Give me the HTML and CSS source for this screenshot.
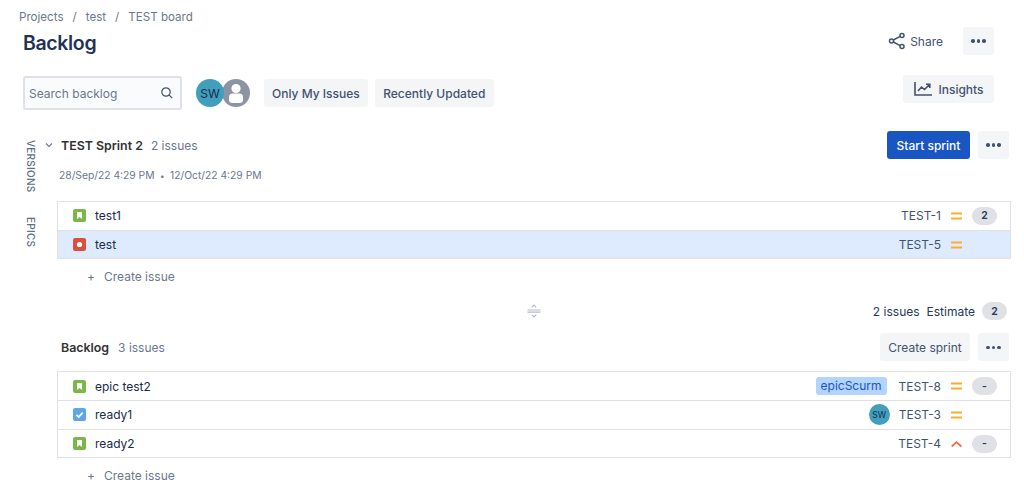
FILE: index.html
```html
<!DOCTYPE html>
<html lang="en">
<head>
<meta charset="utf-8">
<title>Backlog</title>
<link rel="stylesheet" href="styles.css">
</head>
<body>
<div class="page">
  <nav class="crumbs"><span>Projects</span><span class="sep">/</span><span>test</span><span class="sep">/</span><span>TEST board</span></nav>
  <header class="title-row">
    <h1>Backlog</h1>
    <div class="title-actions">
      <span class="share">
        <svg width="18" height="18" viewBox="0 0 18 18" fill="none" stroke="#42526e" stroke-width="1.5"><circle cx="3.5" cy="9" r="2"/><circle cx="14" cy="3.5" r="2"/><circle cx="14" cy="14.5" r="2"/><path d="M5.3 8l6.9-3.6M5.3 10l6.9 3.6"/></svg>
        Share
      </span>
      <button class="btn dots"><i></i><i></i><i></i></button>
    </div>
  </header>
  <div class="toolbar">
    <div class="search"><span>Search backlog</span>
      <svg width="14" height="14" viewBox="0 0 14 14" fill="none" stroke="#42526e" stroke-width="1.2"><circle cx="6" cy="6" r="4.2"/><path d="M9.2 9.2l3 3"/></svg>
    </div>
    <div class="avatars">
      <span class="avatar sw">SW</span>
      <span class="avatar ghost">
        <svg width="28" height="28" viewBox="0 0 28 28"><circle cx="14" cy="14" r="14" fill="#8c93a3"/><circle cx="14" cy="9.5" r="4.6" fill="#fff"/><rect x="7" y="14.5" width="14" height="9.5" rx="3.5" fill="#fff"/></svg>
      </span>
    </div>
    <button class="btn filter">Only My Issues</button>
    <button class="btn filter">Recently Updated</button>
    <button class="btn insights">
      <svg width="18" height="14" viewBox="0 0 18 14" fill="none" stroke="#42526e" stroke-width="1.6"><path d="M1 0v13h17"/><path d="M4 9l3.5-4 3 2.5L15.5 2.5M12 2.2h3.8V6"/></svg>
      Insights
    </button>
  </div>
  <div class="body">
    <aside class="rail"><span>VERSIONS</span><span>EPICS</span></aside>
    <main class="content">
      <section class="sprint">
        <div class="sec-head">
          <div class="sec-title">
            <svg class="chev" width="8" height="6" viewBox="0 0 8 6" fill="none" stroke="#6b778c" stroke-width="1.1"><path d="M1 1.5l3 3 3-3"/></svg>
            <strong>TEST Sprint 2</strong><span class="count">2 issues</span>
          </div>
          <div class="sec-actions">
            <button class="btn primary">Start sprint</button>
            <button class="btn dots"><i></i><i></i><i></i></button>
          </div>
        </div>
        <div class="dates">28/Sep/22 4:29 PM<span class="dot">•</span>12/Oct/22 4:29 PM</div>
        <ul class="issues">
          <li class="issue">
            <svg class="type" width="13" height="13" viewBox="0 0 13 13"><rect width="13" height="13" rx="2" fill="#7ab648"/><path d="M4 3h5v7L6.5 8 4 10z" fill="#fff"/></svg>
            <span class="name">test1</span>
            <span class="key">TEST-1</span>
            <span class="prio"><svg width="11" height="8" viewBox="0 0 11 8" fill="#ffab2e"><rect y="0.5" width="11" height="2"/><rect y="5.5" width="11" height="2"/></svg></span>
            <span class="est"><b class="pill">2</b></span>
          </li>
          <li class="issue selected">
            <svg class="type" width="13" height="13" viewBox="0 0 13 13"><rect width="13" height="13" rx="2" fill="#d9503f"/><circle cx="6.5" cy="6.5" r="2.6" fill="#fff"/></svg>
            <span class="name">test</span>
            <span class="key">TEST-5</span>
            <span class="prio"><svg width="11" height="8" viewBox="0 0 11 8" fill="#ffab2e"><rect y="0.5" width="11" height="2"/><rect y="5.5" width="11" height="2"/></svg></span>
            <span class="est"></span>
          </li>
        </ul>
        <div class="create"><span class="plus">+</span>Create issue</div>
      </section>
      <div class="summary">
        <svg class="grip" width="14" height="14" viewBox="0 0 14 14" fill="none" stroke="#b3bac5" stroke-width="1.2"><path d="M0.5 6h13M0.5 8.2h13"/><path d="M4.8 3.4L7 1.2l2.2 2.2M4.8 10.8L7 13l2.2-2.2"/></svg>
        <div class="totals"><span>2 issues</span><span>Estimate</span><b class="pill">2</b></div>
      </div>
      <section class="backlog">
        <div class="sec-head">
          <div class="sec-title"><strong>Backlog</strong><span class="count">3 issues</span></div>
          <div class="sec-actions">
            <button class="btn create-sprint">Create sprint</button>
            <button class="btn dots"><i></i><i></i><i></i></button>
          </div>
        </div>
        <ul class="issues">
          <li class="issue">
            <svg class="type" width="13" height="13" viewBox="0 0 13 13"><rect width="13" height="13" rx="2" fill="#7ab648"/><path d="M4 3h5v7L6.5 8 4 10z" fill="#fff"/></svg>
            <span class="name">epic test2</span>
            <span class="epic">epicScurm</span>
            <span class="key">TEST-8</span>
            <span class="prio"><svg width="11" height="8" viewBox="0 0 11 8" fill="#ffab2e"><rect y="0.5" width="11" height="2"/><rect y="5.5" width="11" height="2"/></svg></span>
            <span class="est"><b class="pill">-</b></span>
          </li>
          <li class="issue">
            <svg class="type" width="13" height="13" viewBox="0 0 13 13"><rect width="13" height="13" rx="2" fill="#5ea6e6"/><path d="M3.5 6.8l2.2 2.2 4-4.4" fill="none" stroke="#fff" stroke-width="1.7"/></svg>
            <span class="name">ready1</span>
            <span class="avatar mini">SW</span>
            <span class="key">TEST-3</span>
            <span class="prio"><svg width="11" height="8" viewBox="0 0 11 8" fill="#ffab2e"><rect y="0.5" width="11" height="2"/><rect y="5.5" width="11" height="2"/></svg></span>
            <span class="est"></span>
          </li>
          <li class="issue">
            <svg class="type" width="13" height="13" viewBox="0 0 13 13"><rect width="13" height="13" rx="2" fill="#7ab648"/><path d="M4 3h5v7L6.5 8 4 10z" fill="#fff"/></svg>
            <span class="name">ready2</span>
            <span class="key">TEST-4</span>
            <span class="prio"><svg width="11" height="8" viewBox="0 0 11 8" fill="none" stroke="#f2684a" stroke-width="1.8"><path d="M0.7 6.5L5.5 2.2l4.8 4.3"/></svg></span>
            <span class="est"><b class="pill">-</b></span>
          </li>
        </ul>
        <div class="create"><span class="plus">+</span>Create issue</div>
      </section>
    </main>
  </div>
</div>
</body>
</html>
```

FILE: styles.css
```css
* { box-sizing: border-box; }
html, body { margin: 0; height: 100%; overflow: hidden; background: #fff; }
body { font-family: Inter, "Liberation Sans", sans-serif; font-size: 12px; color: #42526e; }
ul { list-style: none; margin: 0; padding: 0; }
button { font: inherit; border: 0; }
.page { padding: 11px 13px 0 19px; height: 492px; }

.crumbs { display: flex; gap: 8px; height: 13px; line-height: 13px; color: #6b778c; font-size: 11.6px; }
.crumbs .sep { margin: 0 1px; }

.title-row { display: flex; justify-content: space-between; align-items: flex-start; margin-top: 3px; padding-left: 4px; padding-right: 17px; height: 27px; }
h1 { margin: 4px 0 0; font-size: 19.5px; line-height: 24px; font-weight: 600; color: #1f3258; letter-spacing: -0.35px; }
.title-actions { display: flex; align-items: center; gap: 20px; }
.share { display: flex; align-items: center; gap: 4px; color: #42526e; font-size: 12px; }

.btn { display: inline-flex; align-items: center; justify-content: center; border-radius: 3px; background: #f4f5f7; color: #42526e; height: 28px; font-size: 12px; font-weight: 500; }
.dots { width: 31px; gap: 2px; }
.dots i { width: 3.6px; height: 3.6px; border-radius: 50%; background: #42526e; }
.primary { width: 83px; background: #1a55c4; color: #fff; }
.create-sprint { width: 90px; font-weight: 400; }

.toolbar { display: flex; align-items: center; margin-top: 22px; padding-left: 4px; padding-right: 17px; height: 34px; }
.search { display: flex; align-items: center; justify-content: space-between; width: 159px; height: 34px; padding: 0 6px 0 4px; border: 2px solid #dfe1e6; border-radius: 3px; background: #fafbfc; color: #6b778c; font-size: 12px; }
.avatars { display: flex; margin-left: 14px; }
.avatar { display: flex; align-items: center; justify-content: center; border-radius: 50%; }
.avatar.sw { width: 28px; height: 28px; background: #419fbc; color: #172b4d; font-size: 12px; position: relative; z-index: 1; }
.avatar.ghost { width: 28px; height: 28px; margin-left: -2px; }
.filter { margin-left: 7px; padding: 0 8px; }
.filter + .filter { padding: 0 8.5px; }
.avatars + .filter { margin-left: 14px; }
.insights { margin-left: auto; margin-top: -8px; width: 91px; gap: 6px; padding-left: 7px; }

.body { display: flex; margin-top: 21px; }
.rail { width: 24px; flex: none; display: flex; flex-direction: column; gap: 25px; padding-top: 9px; font-size: 10px; font-weight: 500; color: #5e6c84; line-height: 11px; letter-spacing: 0.25px; }
.rail span { writing-mode: vertical-rl; width: 22px; display: flex; justify-content: flex-start; align-items: center; }
.content { flex: 1; margin-left: 14px; }

.sec-head { display: flex; justify-content: space-between; align-items: center; height: 28px; }
.sec-title { display: flex; align-items: center; }
.sec-title strong { font-size: 12.4px; font-weight: 600; color: #333; }
.chev { margin: 0 7px 0 0; position: absolute; left: 45px; }
.sprint .sec-title { padding-left: 4px; }
.count { margin-left: 9px; color: #6b778c; }
.sprint .count { margin-left: 8px; }
.sec-actions { display: flex; gap: 8px; margin-right: 2px; }

.dates { margin-top: 9px; padding-left: 2px; height: 14px; line-height: 14px; font-size: 10.3px; color: #6b778c; }
.dot { margin: 0 5.5px; font-size: 8px; }

.sprint .issues { margin-top: 19px; }
.issues { border: 1px solid #dfe1e6; border-bottom-width: 0; }
.issue { display: flex; align-items: center; height: 28.7px; padding: 0 13px 0 15px; border-bottom: 1px solid #dfe1e6; color: #172b4d; font-size: 12px; }
.issue.selected { background: #deebff; }
.type { flex: none; margin-right: 9px; }
.name { flex: 1; }
.key { color: #42526e; margin-left: 9px; }
.epic + .key { margin-left: 12px; }
.prio { display: flex; width: 11px; margin-left: 10px; }
.est { display: flex; justify-content: flex-end; width: 35px; }
.pill { display: inline-flex; align-items: center; justify-content: center; width: 25px; height: 18px; border-radius: 9px; background: #dfe1e6; color: #253858; font-size: 10.5px; font-weight: 600; }
.epic { height: 18px; line-height: 18px; padding: 0 5px; border-radius: 3px; background: #b3d4ff; color: #1a55c4; }
.avatar.mini { width: 21px; height: 21px; background: #419fbc; color: #172b4d; font-size: 8.5px; }

.create { display: flex; align-items: center; margin-top: 9px; padding-left: 30px; height: 16px; color: #6b778c; }
.plus { margin-right: 9px; font-size: 12px; }

.summary { position: relative; display: flex; justify-content: flex-end; align-items: center; height: 18px; margin-top: 18px; }
.grip { position: absolute; left: 470px; top: 2px; }
.totals { display: flex; align-items: center; gap: 7px; color: #253858; padding-right: 4px; }

.backlog { margin-top: 13px; }
.backlog .sec-head { padding-left: 4px; }
.backlog .issues { margin-top: 10px; }
```
